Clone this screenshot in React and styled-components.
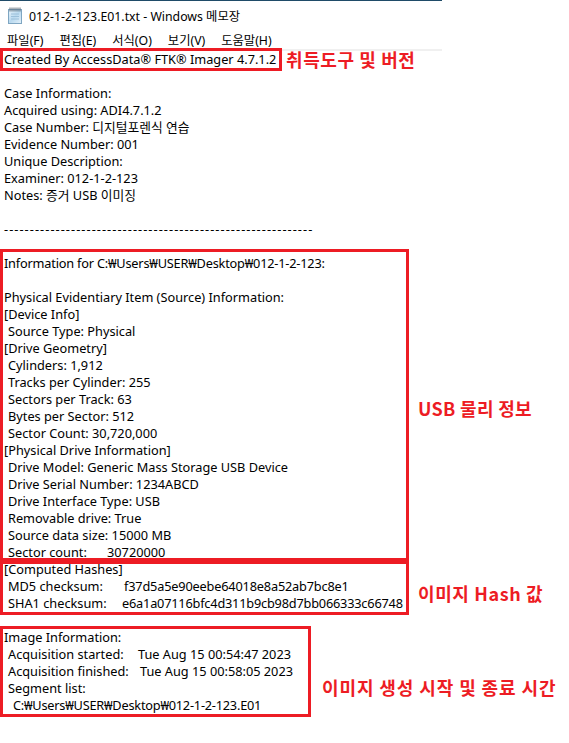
import React from 'react';
import styled, { createGlobalStyle } from 'styled-components';

// page reset + default font
const GlobalStyle = createGlobalStyle`
  *, *::before, *::after { box-sizing: border-box; }
  html, body { margin: 0; padding: 0; background: #fff; }
  body { font-family: "Noto Sans", "Noto Sans CJK KR", sans-serif; }
`;

const Page = styled.div`
  width: 569px;
  height: 743px;
  overflow: hidden;
  background: #fff;
`;

const TitleBar = styled.div`
  width: 442px;
  height: 30px;
  border-top: 1px solid #1f4b68;
  display: flex;
  align-items: center;
  gap: 6px;
  padding-left: 7px;
`;

const Title = styled.span`
  font-size: 12.3px;
  color: #000;
  white-space: pre;
`;

const MenuBar = styled.div`
  width: 442px;
  height: 21px;
  border-bottom: 2px solid #f0f0f0;
  display: flex;
  align-items: center;
`;

const MenuItem = styled.span`
  font-size: 12.3px;
  color: #000;
  padding: 0 8px;
  &:first-child { padding-left: 7px; }
`;

const Editor = styled.div`
  padding-left: 3px;
`;

const Line = styled.div`
  height: 17px;
  line-height: 17px;
  font-size: 12.75px;
  color: #000;
  white-space: pre;
  padding-left: ${(p) => p.$indent ?? 1}px;
  letter-spacing: ${(p) => p.$spacing ?? 0}px;
`;

// label part of "key:   value" lines, fixed width so the value starts where it does in the file
const Key = styled.span`
  display: inline-block;
  width: ${(p) => p.$w}px;
  letter-spacing: 0;
`;

const Row = styled.div`
  display: flex;
  align-items: flex-start;
  gap: ${(p) => p.$gap}px;
  margin-top: ${(p) => (p.$lift ? -p.$lift : 0)}px;
`;

const Box = styled.div`
  width: ${(p) => p.$w}px;
  flex: none;
  outline: 3px solid #ed1c24;
  padding-top: ${(p) => p.$lift ?? 0}px;
`;

const Label = styled.span`
  color: #ed1c24;
  font-family: "Noto Sans CJK KR", "Noto Sans", sans-serif;
  font-weight: 700;
  font-size: 18px;
  line-height: 18px;
  letter-spacing: ${(p) => p.$spacing ?? 0.6}px;
  white-space: pre;
  margin-top: ${(p) => p.$top}px;
`;

function NotepadIcon() {
  return (
    <svg width="16" height="17" viewBox="0 0 16 17">
      <defs>
        <linearGradient id="pg" x1="0" y1="0" x2="1" y2="1">
          <stop offset="0" stopColor="#eaf5fc" />
          <stop offset="0.5" stopColor="#b9d9ef" />
          <stop offset="1" stopColor="#e4f1fa" />
        </linearGradient>
      </defs>
      <rect x="1.5" y="2.5" width="13" height="14" fill="url(#pg)" stroke="#7fa6c2" />
      <path d="M4 7h8M4 9.5h8M4 12h8" stroke="#9cc0da" strokeWidth="1" />
      {[3, 5, 7, 9, 11, 13].map((x) => (
        <rect key={x} x={x - 0.5} y="0.5" width="1" height="4" fill="#5a6b78" />
      ))}
    </svg>
  );
}

const menus = ['파일(F)', '편집(E)', '서식(O)', '보기(V)', '도움말(H)'];

function App() {
  return (
    <Page>
      <GlobalStyle />
      <TitleBar>
        <NotepadIcon />
        <Title>012-1-2-123.E01.txt - Windows 메모장</Title>
      </TitleBar>
      <MenuBar>
        {menus.map((m) => (
          <MenuItem key={m}>{m}</MenuItem>
        ))}
      </MenuBar>

      <Editor>
        <Row $gap={7}>
          <Box $w={276}>
            <Line>Created By AccessData® FTK® Imager 4.7.1.2</Line>
          </Box>
          <Label $top={-1}>취득도구 및 버전</Label>
        </Row>
        <Line> </Line>
        <Line>Case Information: </Line>
        <Line>Acquired using: ADI4.7.1.2</Line>
        <Line>Case Number: 디지털포렌식 연습</Line>
        <Line>Evidence Number: 001</Line>
        <Line>Unique Description: </Line>
        <Line>Examiner: 012-1-2-123</Line>
        <Line>Notes: 증거 USB 이미징</Line>
        <Line> </Line>
        <Line $spacing={1.05}>{'-'.repeat(60)}</Line>
        <Line> </Line>

        <Row $gap={12} $lift={3}>
          <Box $w={403} $lift={3}>
            <Line $spacing={-0.2}>Information for C:₩Users₩USER₩Desktop₩012-1-2-123:</Line>
            <Line> </Line>
            <Line>Physical Evidentiary Item (Source) Information:</Line>
            <Line>[Device Info]</Line>
            <Line $indent={5}>Source Type: Physical</Line>
            <Line>[Drive Geometry]</Line>
            <Line $indent={5}>Cylinders: 1,912</Line>
            <Line $indent={5}>Tracks per Cylinder: 255</Line>
            <Line $indent={5}>Sectors per Track: 63</Line>
            <Line $indent={5}>Bytes per Sector: 512</Line>
            <Line $indent={5}>Sector Count: 30,720,000</Line>
            <Line>[Physical Drive Information]</Line>
            <Line $indent={5}>Drive Model: Generic Mass Storage USB Device</Line>
            <Line $indent={5}>Drive Serial Number: 1234ABCD</Line>
            <Line $indent={5}>Drive Interface Type: USB</Line>
            <Line $indent={5}>Removable drive: True</Line>
            <Line $indent={5}>Source data size: 15000 MB</Line>
            <Line $indent={5}>
              <Key $w={99}>Sector count:</Key>30720000
            </Line>
          </Box>
          <Label $top={147} $spacing={0.3}>USB 물리 정보</Label>
        </Row>

        <Row $gap={12}>
          <Box $w={403}>
            <Line>[Computed Hashes]</Line>
            <Line $indent={5} $spacing={-0.18}>
              <Key $w={116}>MD5 checksum:</Key>f37d5a5e90eebe64018e8a52ab7bc8e1
            </Line>
            <Line $indent={5} $spacing={-0.2}>
              <Key $w={114}>SHA1 checksum:</Key>e6a1a07116bfc4d311b9cb98d7bb066333c66748
            </Line>
          </Box>
          <Label $top={23}>이미지 Hash 값</Label>
        </Row>
        <Line> </Line>

        <Row $gap={14}>
          <Box $w={305}>
            <Line>Image Information:</Line>
            <Line $indent={5}>
              <Key $w={130}>Acquisition started:</Key>Tue Aug 15 00:54:47 2023
            </Line>
            <Line $indent={5}>
              <Key $w={132}>Acquisition finished:</Key>Tue Aug 15 00:58:05 2023
            </Line>
            <Line $indent={5}>Segment list:</Line>
            <Line $indent={10} $spacing={-0.22}>C:₩Users₩USER₩Desktop₩012-1-2-123.E01</Line>
          </Box>
          <Label $top={49} $spacing={0.9}>이미지 생성 시작 및 종료 시간</Label>
        </Row>
      </Editor>
    </Page>
  );
}

export default App;
